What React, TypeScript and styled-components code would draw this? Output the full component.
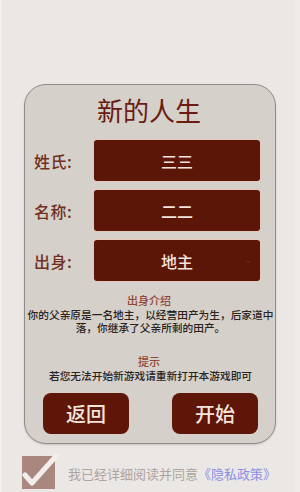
import {FunctionComponent} from "react";
import styled, {createGlobalStyle} from "styled-components";

const GlobalStyle = createGlobalStyle`
  html, body {
    margin: 0;
    padding: 0;
    background: #ebe7e4;
  }
  body {
    font-family: "Noto Sans CJK SC", "Noto Sans", sans-serif;
  }
`;

const fields = [
  {label: "姓氏", value: "三三"},
  {label: "名称", value: "二二"},
  {label: "出身", value: "地主", select: true},
];

const App: FunctionComponent = () => {
  return (
    <>
      <GlobalStyle/>
      <Screen>
        <Card>
          <Title>新的人生</Title>
          <Form>
            {fields.map(f => (
              <Row key={f.label}>
                <Label>{f.label}:</Label>
                <Field>
                  {f.value}
                  {f.select && <Caret>⌄</Caret>}
                </Field>
              </Row>
            ))}
          </Form>
          <Heading>出身介绍</Heading>
          <Body>你的父亲原是一名地主，以经营田产为生，后家道中落，你继承了父亲所剩的田产。</Body>
          <Heading top={21}>提示</Heading>
          <Body>若您无法开始新游戏请重新打开本游戏即可</Body>
          <Buttons>
            <Button>返回</Button>
            <Button>开始</Button>
          </Buttons>
        </Card>
        <Agree>
          <CheckIcon width="38" height="36" viewBox="0 0 38 36">
            <rect x="0" y="3" width="33" height="33" fill="#a9877f"/>
            <path d="M3 22 L10 30 L35 2" stroke="#f2eeec" strokeWidth="5" fill="none"
                  strokeLinecap="round" strokeLinejoin="round"/>
          </CheckIcon>
          <AgreeText>我已经详细阅读并同意<Policy>《隐私政策》</Policy></AgreeText>
        </Agree>
      </Screen>
    </>
  );
};

const Screen = styled.div`
  width: 300px;
  height: 492px;
  box-sizing: border-box;
  padding-top: 84px;
  overflow: hidden;
  border-left: 2px solid #f3f0ee;
  border-right: 7px solid #eeeae7;
`;

const Card = styled.div`
  width: 252px;
  margin-left: 22px;
  box-sizing: border-box;
  background: #d6d0cb;
  border: 1.5px solid #8f8b88;
  border-radius: 22px;
  box-shadow: 0 1px 2px rgba(0, 0, 0, 0.15);
  padding: 10px 15px 9px 9px;
  display: flex;
  flex-direction: column;
  align-items: stretch;
`;

const Title = styled.div`
  text-align: center;
  font-size: 26px;
  line-height: 30px;
  color: #6a1c10;
  padding-left: 4px;
`;

const Form = styled.div`
  margin-top: 15px;
  display: flex;
  flex-direction: column;
  gap: 9px;
`;

const Row = styled.div`
  display: flex;
  align-items: center;
`;

const Label = styled.div`
  width: 60px;
  flex-shrink: 0;
  font-size: 16px;
  font-weight: 500;
  letter-spacing: 0.5px;
  color: #70301f;
`;

const Field = styled.div`
  position: relative;
  flex: 1;
  height: 41px;
  border-radius: 3px;
  background: #5c1608;
  box-shadow: 0 0 0 1px #e6c7bd;
  color: #f3e3dc;
  font-size: 16px;
  font-weight: 500;
  display: flex;
  align-items: center;
  justify-content: center;
`;

const Caret = styled.span`
  position: absolute;
  right: 7px;
  top: 10px;
  font-size: 11px;
  color: #6e2a1e;
`;

const Heading = styled.div<{top?: number}>`
  margin-top: ${({top}) => top ?? 13}px;
  margin-bottom: 1px;
  text-align: center;
  font-size: 11px;
  font-weight: 500;
  line-height: 13px;
  color: #924634;
  padding-left: 4px;
`;

const Body = styled.div`
  text-align: center;
  font-size: 10.7px;
  font-weight: 500;
  line-height: 13px;
  color: #2a2421;
  margin: 0 -15px 0 -8px;
`;

const Buttons = styled.div`
  margin-top: 11px;
  display: flex;
  justify-content: space-between;
  padding-left: 9px;
  padding-right: 2px;
`;

const Button = styled.div`
  width: 86px;
  height: 41px;
  border-radius: 8px;
  background: #5e1608;
  color: #f4e4dc;
  font-size: 20px;
  font-weight: 500;
  display: flex;
  align-items: center;
  justify-content: center;
`;

const Agree = styled.div`
  margin-top: 9px;
  margin-left: 20px;
  display: flex;
  align-items: center;
  gap: 8px;
`;

const CheckIcon = styled.svg`
  flex-shrink: 0;
`;

const AgreeText = styled.div`
  font-size: 13px;
  color: #ada4a0;
  padding-top: 4px;
`;

const Policy = styled.span`
  color: #8b8fe4;
`;

export default App;
